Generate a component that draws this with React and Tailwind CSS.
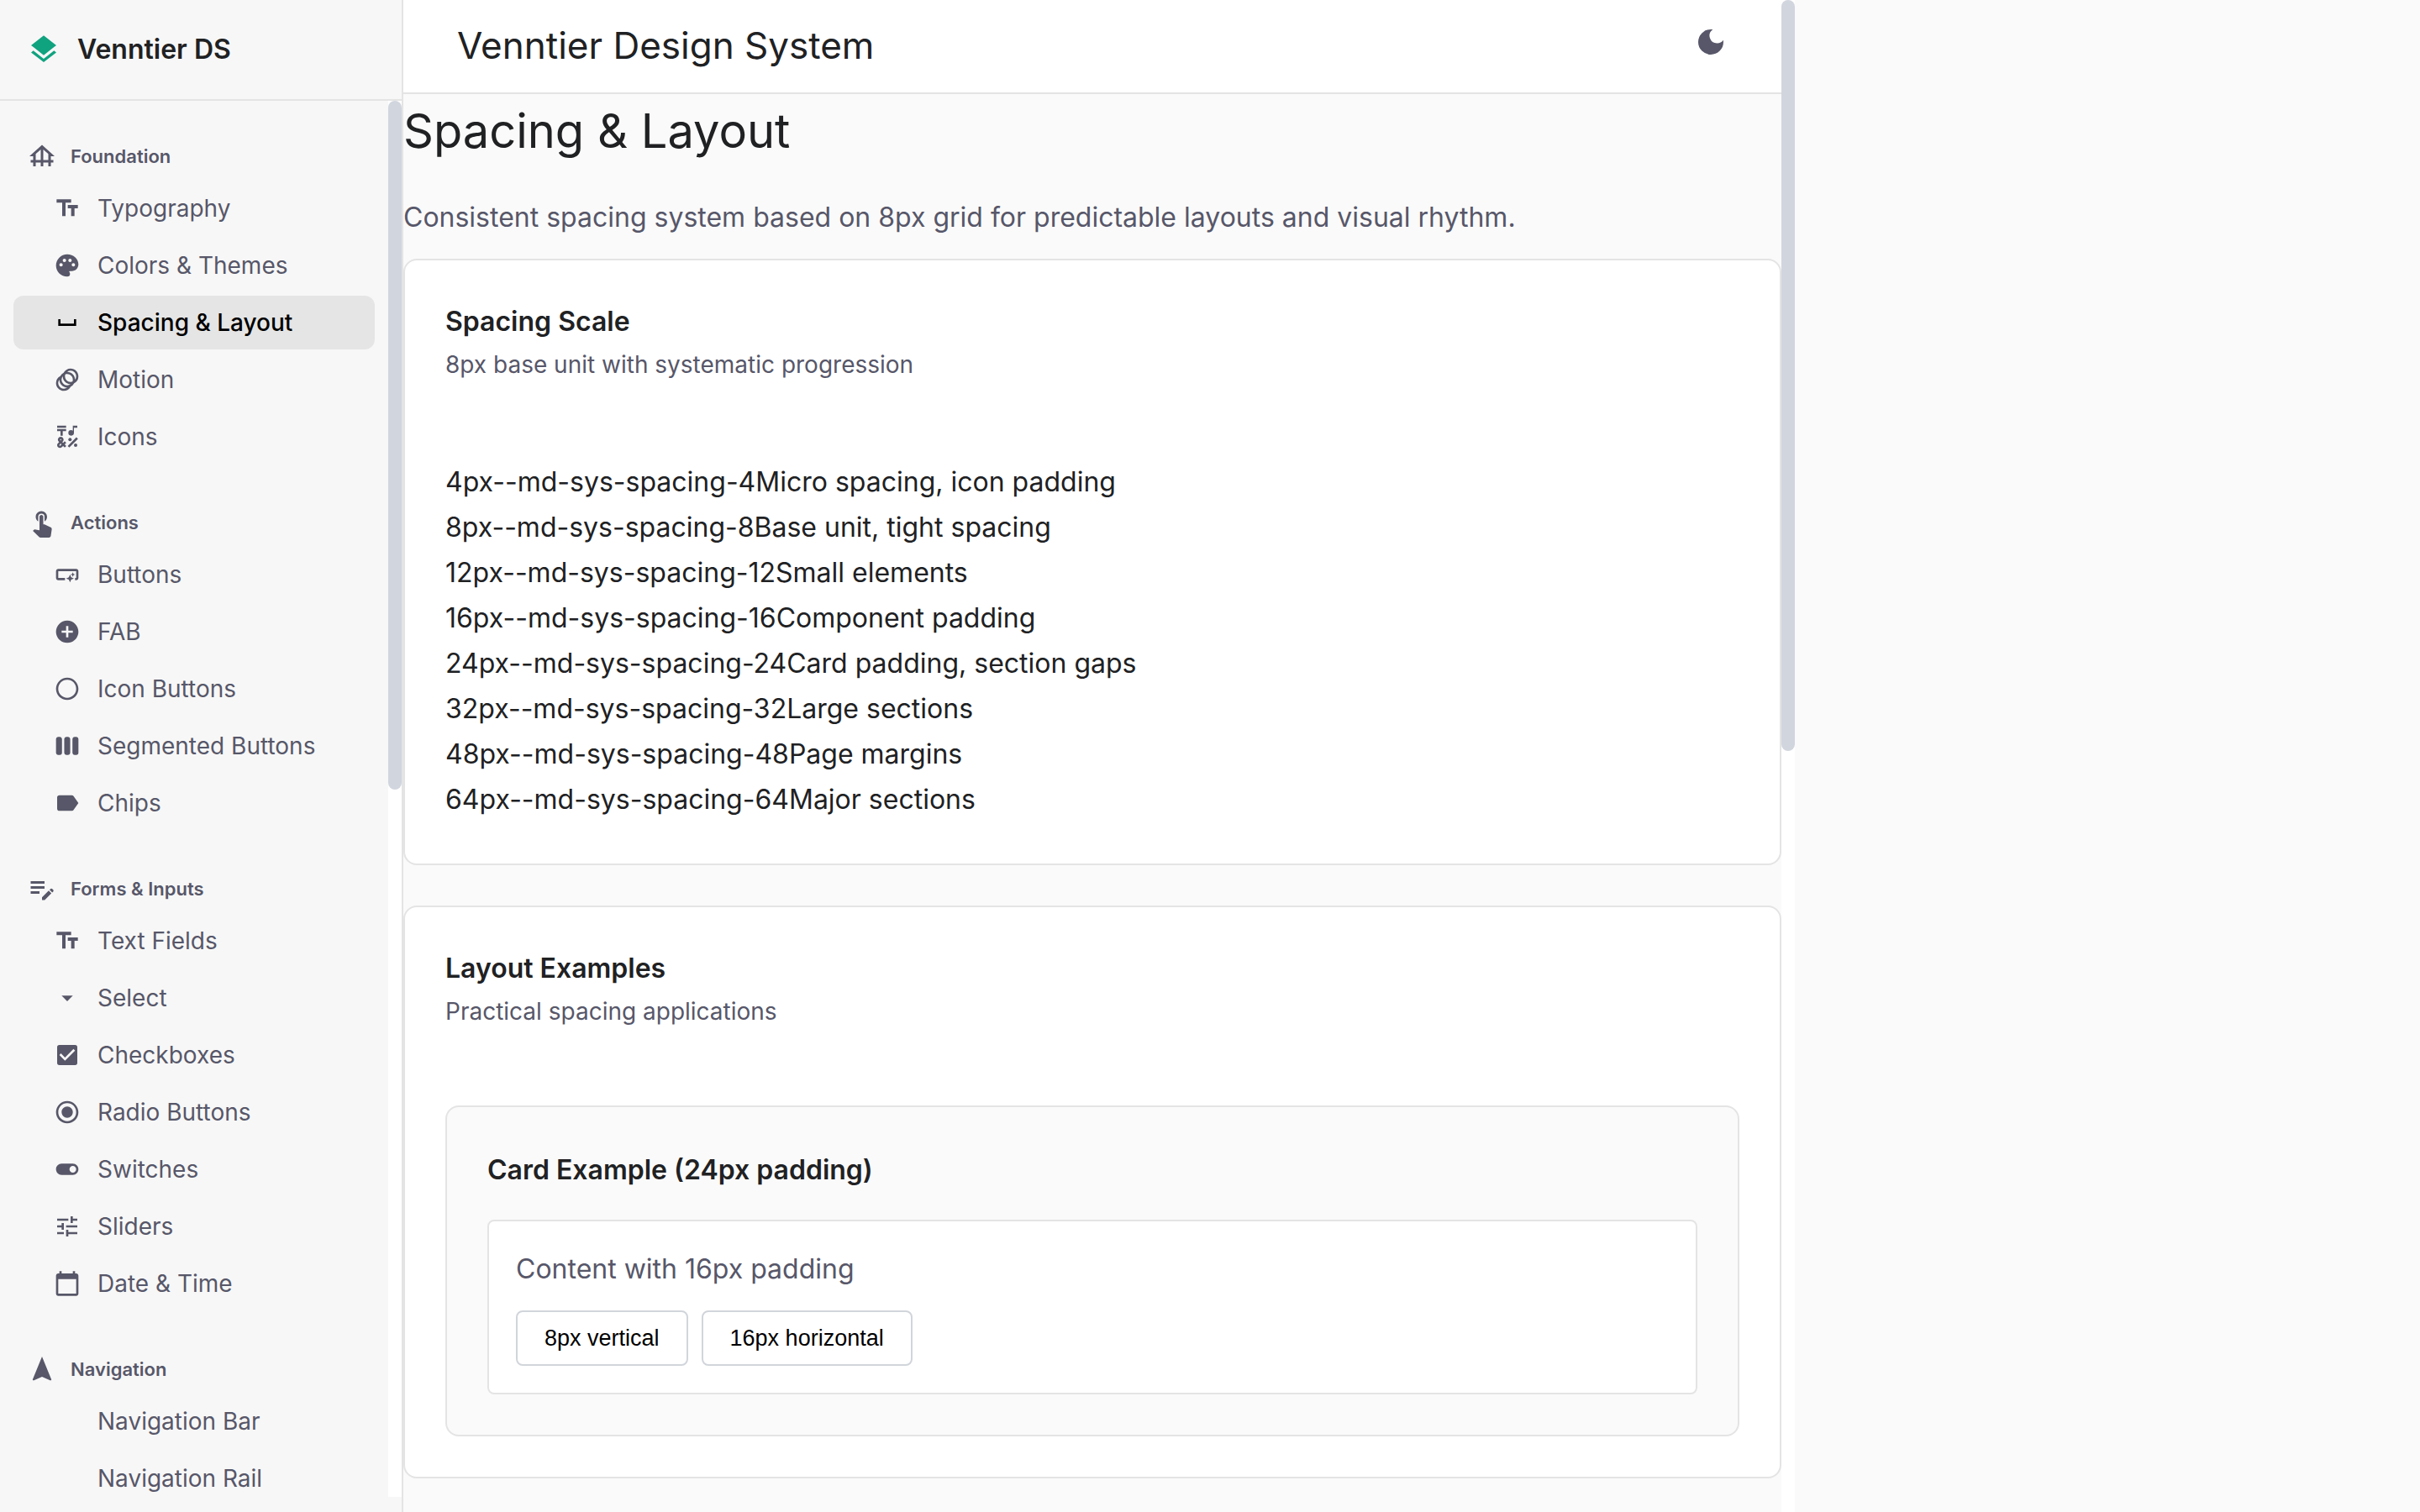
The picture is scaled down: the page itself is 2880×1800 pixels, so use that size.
import React from "react";
import {
  MdAddCircle,
  MdAnimation,
  MdArrowDropDown,
  MdCalendarToday,
  MdCheckBox,
  MdDarkMode,
  MdEditNote,
  MdEmojiSymbols,
  MdFoundation,
  MdLabel,
  MdLayers,
  MdNavigation,
  MdPalette,
  MdRadioButtonChecked,
  MdRadioButtonUnchecked,
  MdSmartButton,
  MdSpaceBar,
  MdTextFields,
  MdToggleOn,
  MdTouchApp,
  MdTune,
  MdViewWeek,
} from "react-icons/md";

const sections = [
  {
    title: "Foundation",
    icon: MdFoundation,
    items: [
      { label: "Typography", icon: MdTextFields },
      { label: "Colors & Themes", icon: MdPalette },
      { label: "Spacing & Layout", icon: MdSpaceBar, active: true },
      { label: "Motion", icon: MdAnimation },
      { label: "Icons", icon: MdEmojiSymbols },
    ],
  },
  {
    title: "Actions",
    icon: MdTouchApp,
    items: [
      { label: "Buttons", icon: MdSmartButton },
      { label: "FAB", icon: MdAddCircle },
      { label: "Icon Buttons", icon: MdRadioButtonUnchecked },
      { label: "Segmented Buttons", icon: MdViewWeek },
      { label: "Chips", icon: MdLabel },
    ],
  },
  {
    title: "Forms & Inputs",
    icon: MdEditNote,
    items: [
      { label: "Text Fields", icon: MdTextFields },
      { label: "Select", icon: MdArrowDropDown },
      { label: "Checkboxes", icon: MdCheckBox },
      { label: "Radio Buttons", icon: MdRadioButtonChecked },
      { label: "Switches", icon: MdToggleOn },
      { label: "Sliders", icon: MdTune },
      { label: "Date & Time", icon: MdCalendarToday },
    ],
  },
  {
    title: "Navigation",
    icon: MdNavigation,
    items: [{ label: "Navigation Bar" }, { label: "Navigation Rail" }],
  },
];

const scale = [
  [4, "Micro spacing, icon padding"],
  [8, "Base unit, tight spacing"],
  [12, "Small elements"],
  [16, "Component padding"],
  [24, "Card padding, section gaps"],
  [32, "Large sections"],
  [48, "Page margins"],
  [64, "Major sections"],
];

function ScrollTrack({ thumb }) {
  return (
    <div className="w-4 shrink-0 bg-white" aria-hidden="true">
      <div className={`w-full rounded-full bg-[#d1d5de] ${thumb}`} />
    </div>
  );
}

function NavItem({ label, icon: Icon, active }) {
  return (
    <li>
      <a
        href="#"
        aria-current={active ? "page" : undefined}
        className={`flex h-16 items-center gap-5 rounded-xl pl-12 text-[28px] ${
          active ? "bg-[#e5e5e5] font-medium text-black" : "text-[#575769]"
        }`}
      >
        <span className="size-8 shrink-0">{Icon && <Icon className="size-8" />}</span>
        {label}
      </a>
    </li>
  );
}

function NavSection({ title, icon: Icon, items }) {
  return (
    <section className="mb-10">
      <h2 className="flex h-15 items-center gap-4 pl-4 text-[22px] font-semibold text-[#575769]">
        <Icon className="size-9" />
        {title}
      </h2>
      <ul className="flex flex-col gap-1">
        {items.map((item) => (
          <NavItem key={item.label} {...item} />
        ))}
      </ul>
    </section>
  );
}

function Sidebar() {
  return (
    <aside className="flex w-[480px] shrink-0 flex-col border-r-2 border-[#e4e4e4] bg-[#f7f7f7]">
      <div className="flex h-[120px] shrink-0 items-center gap-5 border-b-2 border-[#e4e4e4] px-8">
        <MdLayers className="size-10 text-[#10a37f]" />
        <span className="text-[32px] font-semibold">Venntier DS</span>
      </div>
      <div className="mb-[18px] flex min-h-0 flex-1">
        <nav className="min-w-0 flex-1 overflow-hidden px-4 pt-9">
          {sections.map((section) => (
            <NavSection key={section.title} {...section} />
          ))}
        </nav>
        <ScrollTrack thumb="h-[820px]" />
      </div>
    </aside>
  );
}

function Card({ title, subtitle, children }) {
  return (
    <section className="rounded-2xl border-2 border-[#e4e4e4] bg-white p-12">
      <h3 className="text-[32px] leading-[50px] font-semibold">{title}</h3>
      <p className="mt-1.5 mb-[92px] text-[28px] leading-10 text-[#575769]">{subtitle}</p>
      {children}
    </section>
  );
}

function DemoButton({ children }) {
  return (
    <button
      type="button"
      className="rounded-lg border-2 border-[#d1d5db] bg-white px-8 py-4 font-['Liberation_Sans',Arial,sans-serif] text-[27px] leading-[30px] text-black"
    >
      {children}
    </button>
  );
}

export default function App() {
  return (
    <div className="h-screen overflow-hidden bg-[#fafafa] font-['Inter',sans-serif] text-[#202123]">
      <div className="flex h-full max-w-[2136px]">
        <Sidebar />
        <div className="flex min-w-0 flex-1 flex-col overflow-hidden">
          <header className="flex h-28 shrink-0 items-start justify-between border-b-2 border-[#e4e4e4] bg-white px-16 pt-[30px]">
            <h1 className="text-[44px] leading-12">Venntier Design System</h1>
            <button type="button" aria-label="Toggle dark mode" className="text-[#575769]">
              <MdDarkMode className="size-10" />
            </button>
          </header>
          <main>
            <h2 className="text-[56px] leading-[88px]">Spacing &amp; Layout</h2>
            <p className="mt-8 mb-5.5 text-[32px] leading-[54px] text-[#575769]">
              Consistent spacing system based on 8px grid for predictable layouts and visual rhythm.
            </p>
            <div className="flex flex-col gap-12">
              <Card title="Spacing Scale" subtitle="8px base unit with systematic progression">
                <ul className="py-px text-[32px] leading-[54px]">
                  {scale.map(([size, use]) => (
                    <li key={size}>
                      <span>{size}px</span>
                      <span>--md-sys-spacing-{size}</span>
                      <span>{use}</span>
                    </li>
                  ))}
                </ul>
              </Card>
              <Card title="Layout Examples" subtitle="Practical spacing applications">
                <div className="rounded-2xl border-2 border-[#e4e4e4] bg-[#fafafa] p-12">
                  <h4 className="mb-8 text-[32px] leading-[54px] font-semibold">
                    Card Example (24px padding)
                  </h4>
                  <div className="rounded-lg border-2 border-[#e4e4e4] bg-white p-8">
                    <p className="mb-6 text-[32px] leading-[50px] text-[#575769]">
                      Content with 16px padding
                    </p>
                    <div className="flex gap-4">
                      <DemoButton>8px vertical</DemoButton>
                      <DemoButton>16px horizontal</DemoButton>
                    </div>
                  </div>
                </div>
              </Card>
            </div>
          </main>
        </div>
        <ScrollTrack thumb="h-[894px]" />
      </div>
    </div>
  );
}
